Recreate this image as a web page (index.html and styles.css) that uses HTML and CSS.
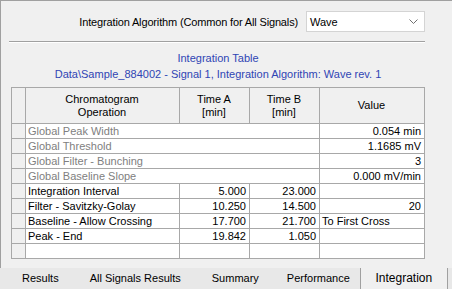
FILE: index.html
```html
<!DOCTYPE html>
<html lang="en">
<head>
    <meta charset="UTF-8">
    <meta name="viewport" content="width=device-width, initial-scale=1.0">
    <title>Integration</title>
    <link rel="stylesheet" href="styles.css">
</head>
<body>
    <div class="window">
        <div class="panel">
            <div class="algo">
                <span class="algo-label">Integration Algorithm (Common for All Signals)</span>
                <div class="select">
                    <span>Wave</span>
                    <svg class="chevron" width="9" height="5" viewBox="0 0 9 5">
                        <path d="M0.5 0.5 L4.5 4.5 L8.5 0.5" fill="none" stroke="#707070" stroke-width="1"/>
                    </svg>
                </div>
            </div>
            <div class="separator"></div>
            <div class="table-box">
                <div class="caption">
                    <div>Integration Table</div>
                    <div>Data\Sample_884002 - Signal 1, Integration Algorithm: Wave rev. 1</div>
                </div>
                <table class="grid">
                    <colgroup>
                        <col class="col-head">
                        <col class="col-op">
                        <col class="col-time">
                        <col class="col-time">
                        <col class="col-value">
                    </colgroup>
                    <tr class="header">
                        <th></th>
                        <th>Chromatogram<br>Operation</th>
                        <th>Time A<br>[min]</th>
                        <th>Time B<br>[min]</th>
                        <th>Value</th>
                    </tr>
                    <tr>
                        <td class="rowhead"></td>
                        <td colspan="3" class="muted">Global Peak Width</td>
                        <td class="num">0.054 min</td>
                    </tr>
                    <tr>
                        <td class="rowhead"></td>
                        <td colspan="3" class="muted">Global Threshold</td>
                        <td class="num">1.1685 mV</td>
                    </tr>
                    <tr>
                        <td class="rowhead"></td>
                        <td colspan="3" class="muted">Global Filter - Bunching</td>
                        <td class="num">3</td>
                    </tr>
                    <tr>
                        <td class="rowhead"></td>
                        <td colspan="3" class="muted">Global Baseline Slope</td>
                        <td class="num">0.000 mV/min</td>
                    </tr>
                    <tr>
                        <td class="rowhead"></td>
                        <td>Integration Interval</td>
                        <td class="num">5.000</td>
                        <td class="num">23.000</td>
                        <td></td>
                    </tr>
                    <tr>
                        <td class="rowhead"></td>
                        <td>Filter - Savitzky-Golay</td>
                        <td class="num">10.250</td>
                        <td class="num">14.500</td>
                        <td class="num">20</td>
                    </tr>
                    <tr>
                        <td class="rowhead"></td>
                        <td>Baseline - Allow Crossing</td>
                        <td class="num">17.700</td>
                        <td class="num">21.700</td>
                        <td>To First Cross</td>
                    </tr>
                    <tr>
                        <td class="rowhead"></td>
                        <td>Peak - End</td>
                        <td class="num">19.842</td>
                        <td class="num">1.050</td>
                        <td></td>
                    </tr>
                    <tr>
                        <td class="rowhead"></td>
                        <td></td>
                        <td></td>
                        <td></td>
                        <td></td>
                    </tr>
                </table>
            </div>
        </div>
        <div class="tabs">
            <div class="tab">Results</div>
            <div class="tab tab-wide">All Signals Results</div>
            <div class="tab">Summary</div>
            <div class="tab">Performance</div>
            <div class="tab tab-active">Integration</div>
        </div>
    </div>
</body>
</html>
```

FILE: styles.css
```css
body {
    margin: 0;
    background: #f0f0f0;
    font-family: "Liberation Sans", Arial, sans-serif;
    font-size: 11px;
    color: #000;
}

.window {
    width: 452px;
    height: 289px;
    overflow: hidden;
}

.panel {
    height: 268px;
    box-sizing: border-box;
    border-top: 1px solid #a0a0a0;
    border-left: 1px solid #a0a0a0;
}

.algo {
    display: flex;
    justify-content: flex-end;
    align-items: center;
    gap: 8px;
    margin: 10px 27px 0 0;
}

.algo-label {
    letter-spacing: -0.15px;
}

.select {
    width: 119px;
    height: 21px;
    box-sizing: border-box;
    border: 1px solid #d4d4d4;
    background: #fff;
    display: flex;
    align-items: center;
    justify-content: space-between;
    padding: 0 6px 0 3px;
}

.separator {
    margin: 9px 27px 0 8px;
    border-top: 1px solid #a0a0a0;
    border-bottom: 1px solid #fff;
}

.table-box {
    margin-left: 10px;
    width: 414px;
}

.caption {
    margin-top: 7px;
    text-align: center;
    color: #2f45b4;
    line-height: 16px;
}

.grid {
    margin-top: 5px;
    width: 414px;
    table-layout: fixed;
    border-collapse: separate;
    border-spacing: 0;
    border-top: 1px solid #a8a8a8;
    border-left: 1px solid #a8a8a8;
}

.col-head {
    width: 14px;
}

.col-op {
    width: 154px;
}

.col-time {
    width: 70px;
}

.col-value {
    width: 105px;
}

.grid th,
.grid td {
    box-sizing: border-box;
    height: 15px;
    padding: 0 3px 0 2px;
    border-right: 1px solid #a8a8a8;
    border-bottom: 1px solid #a8a8a8;
    line-height: 14px;
    white-space: nowrap;
    overflow: hidden;
    background: #fff;
}

.grid th {
    height: 36px;
    font-weight: normal;
    line-height: 13px;
    text-align: center;
    background: #f0f0f0;
}

.grid .rowhead {
    background: #f0f0f0;
}

.muted {
    color: #808080;
}

.num {
    text-align: right;
}

.tabs {
    display: flex;
    height: 21px;
    padding-left: 8px;
    background: #e8e8e8;
}

.tab {
    padding: 0 14px;
    line-height: 20px;
}

.tab-wide {
    padding: 0 17px;
}

.tab-active {
    width: 88px;
    margin-left: -4px;
    box-sizing: border-box;
    text-align: center;
    font-size: 12px;
    background: #f0f0f0;
    border-left: 1px solid #a0a0a0;
    border-right: 1px solid #a0a0a0;
}
```
